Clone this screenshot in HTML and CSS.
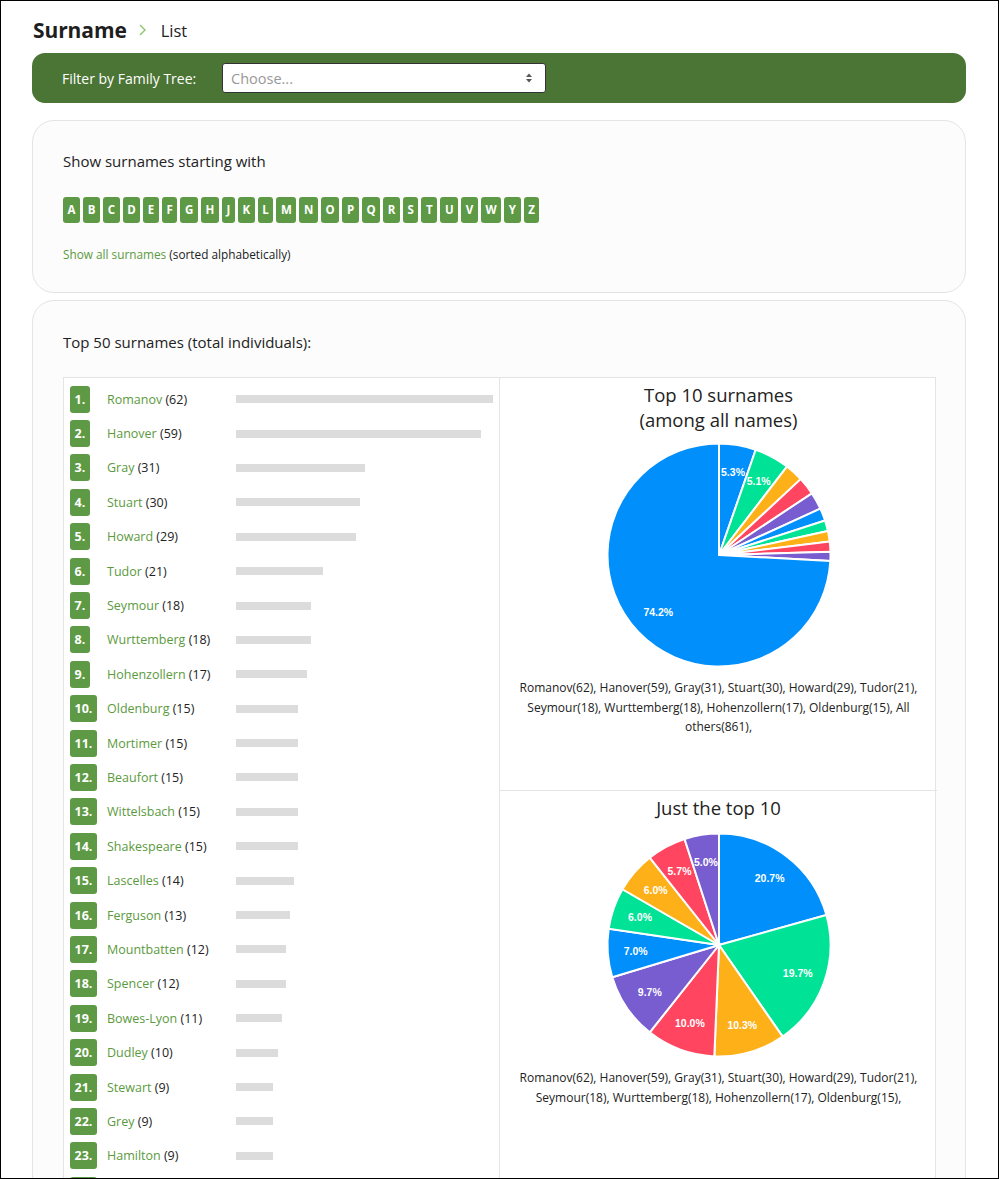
FILE: index.html
```html
<!DOCTYPE html>
<html lang="en">
<head>
<meta charset="utf-8">
<title>Surname List</title>
<link rel="stylesheet" href="styles.css">
</head>
<body>
<div class="frame"></div>
<div class="page">
  <div class="crumbs">
    <span class="crumb-main">Surname</span>
    <svg class="crumb-sep" width="10" height="14" viewBox="0 0 10 14"><polyline points="2,2 7,7 2,12" fill="none" stroke="#8cc56a" stroke-width="1.4"/></svg>
    <span class="crumb-sub">List</span>
  </div>

  <div class="filter-bar">
    <label class="filter-label">Filter by Family Tree:</label>
    <div class="select">
      <span class="select-ph">Choose...</span>
      <svg class="select-arrows" width="8" height="12" viewBox="0 0 8 12"><polygon points="4,1.5 7,5 1,5" fill="#555"/><polygon points="1,7 7,7 4,10.5" fill="#555"/></svg>
    </div>
  </div>

  <div class="card card-letters">
    <div class="card-title">Show surnames starting with</div>
    <div class="letters">
      <a class="letter">A</a><a class="letter">B</a><a class="letter">C</a><a class="letter">D</a><a class="letter">E</a><a class="letter">F</a><a class="letter">G</a><a class="letter">H</a><a class="letter">J</a><a class="letter">K</a><a class="letter">L</a><a class="letter">M</a><a class="letter">N</a><a class="letter">O</a><a class="letter">P</a><a class="letter">Q</a><a class="letter">R</a><a class="letter">S</a><a class="letter">T</a><a class="letter">U</a><a class="letter">V</a><a class="letter">W</a><a class="letter">Y</a><a class="letter">Z</a>
    </div>
    <div class="show-all"><a class="link">Show all surnames</a> (sorted alphabetically)</div>
  </div>

  <div class="card card-top">
    <div class="card-title">Top 50 surnames (total individuals):</div>
    <div class="top-table">
      <div class="rank-list" id="rankList"></div>
      <div class="charts">
        <div class="chart-cell chart-cell-1">
          <div class="chart-title">Top 10 surnames<br>(among all names)</div>
          <svg class="pie" id="pie1" width="230" height="230" viewBox="0 0 230 230"></svg>
          <div class="legend">Romanov(62), Hanover(59), Gray(31), Stuart(30), Howard(29), Tudor(21), Seymour(18), Wurttemberg(18), Hohenzollern(17), Oldenburg(15), All others(861),</div>
        </div>
        <div class="chart-cell chart-cell-2">
          <div class="chart-title">Just the top 10</div>
          <svg class="pie" id="pie2" width="230" height="230" viewBox="0 0 230 230"></svg>
          <div class="legend">Romanov(62), Hanover(59), Gray(31), Stuart(30), Howard(29), Tudor(21), Seymour(18), Wurttemberg(18), Hohenzollern(17), Oldenburg(15),</div>
        </div>
      </div>
    </div>
  </div>
</div>
<script src="script.js"></script>
</body>
</html>
```

FILE: styles.css
```css
* { box-sizing: border-box; }
html, body { margin: 0; padding: 0; background: #fff; }
body {
  font-family: "Open Sans", "Noto Sans", sans-serif;
  color: #222;
}
.frame {
  position: fixed;
  left: 0; top: 0;
  width: 999px; height: 1179px;
  border: 1px solid #000;
  pointer-events: none;
  z-index: 10;
}
.page {
  width: 934px;
  margin-left: 32px;
  padding-top: 16px;
}
.crumbs {
  display: flex;
  align-items: center;
  height: 28px;
  padding-left: 1px;
}
.crumb-main {
  font-size: 21px;
  font-weight: 700;
  color: #1e1e1e;
  letter-spacing: -0.1px;
}
.crumb-sep { margin-left: 11px; margin-right: 13px; }
.crumb-sub { font-size: 16.5px; color: #222; }

.filter-bar {
  margin-top: 9px;
  background: #4b7535;
  border-radius: 13px;
  padding: 10px 0 10px 30px;
  display: flex;
  align-items: center;
}
.filter-label {
  width: 160px;
  color: #fff;
  font-size: 14px;
}
.select {
  width: 324px;
  height: 30px;
  background: #fff;
  border: 1px solid #333;
  border-radius: 3px;
  display: flex;
  align-items: center;
  justify-content: space-between;
  padding: 0 12px 0 8px;
}
.select-ph { color: #999; font-size: 14.5px; }

.card {
  background: #fcfcfc;
  border: 1px solid #e4e4e4;
  border-radius: 22px;
  padding-left: 30px;
  padding-right: 29px;
}
.card-letters {
  margin-top: 17px;
  padding-top: 28px;
  padding-bottom: 29px;
}
.card-title {
  font-size: 15px;
  line-height: 24px;
  color: #222;
}
.letters {
  margin-top: 24px;
  display: flex;
  gap: 3px;
}
.letter {
  display: block;
  height: 26px;
  line-height: 26px;
  padding: 0 4.6px;
  background: #5e9a45;
  color: #fff;
  font-weight: 700;
  font-size: 11.5px;
  border-radius: 3px;
  text-align: center;
}
.show-all {
  margin-top: 22px;
  font-size: 11.8px;
  line-height: 18px;
  color: #222;
}
.link { color: #5b9a40; }

.card-top {
  margin-top: 7px;
  padding-top: 29px;
  height: 920px;
}
.top-table {
  margin-top: 23px;
  display: grid;
  grid-template-columns: 436px 437px;
  border: 1px solid #e4e4e4;
  background: #fff;
}
.rank-list {
  border-right: 1px solid #e4e4e4;
  padding: 4px 6px 0 6px;
}
.rank-row {
  display: flex;
  align-items: center;
  height: 34.4px;
}
.rank-badge-col { width: 37px; }
.rank-badge {
  display: inline-block;
  height: 27px;
  line-height: 27px;
  padding: 0 4.5px;
  background: #5e9a45;
  color: #fff;
  font-weight: 700;
  font-size: 12.5px;
  border-radius: 3px;
}
.rank-name {
  width: 129px;
  font-size: 12.5px;
  color: #222;
}
.bar-track { flex: 1; }
.bar {
  height: 8px;
  background: #dcdcdc;
}

.chart-cell {
  text-align: center;
  padding-top: 4px;
}
.chart-cell-1 {
  height: 413px;
  border-bottom: 1px solid #e4e4e4;
}
.chart-cell-2 { height: 420px; }
.chart-title {
  font-size: 18.5px;
  line-height: 25px;
  color: #222;
}
.pie { display: block; margin: 8px auto 0; }
.chart-cell-2 .pie { margin-top: 10px; }
.legend {
  margin-top: 8px;
  padding: 0 14px;
  font-size: 12px;
  line-height: 19.5px;
  color: #222;
}
.pie-label {
  font-family: "Liberation Sans", Arial, sans-serif;
  font-weight: 700;
  font-size: 10.5px;
  fill: #fff;
}
```

FILE: script.js
```js
(function () {
  var rows = [
    ["Romanov", 62], ["Hanover", 59], ["Gray", 31], ["Stuart", 30], ["Howard", 29],
    ["Tudor", 21], ["Seymour", 18], ["Wurttemberg", 18], ["Hohenzollern", 17], ["Oldenburg", 15],
    ["Mortimer", 15], ["Beaufort", 15], ["Wittelsbach", 15], ["Shakespeare", 15], ["Lascelles", 14],
    ["Ferguson", 13], ["Mountbatten", 12], ["Spencer", 12], ["Bowes-Lyon", 11], ["Dudley", 10],
    ["Stewart", 9], ["Grey", 9], ["Hamilton", 9], ["Boleyn", 8]
  ];
  var list = document.getElementById("rankList");
  var max = 62, full = 257;
  rows.forEach(function (r, i) {
    var row = document.createElement("div");
    row.className = "rank-row";
    row.innerHTML =
      '<div class="rank-badge-col"><span class="rank-badge">' + (i + 1) + '.</span></div>' +
      '<div class="rank-name"><a class="link">' + r[0] + '</a> (' + r[1] + ')</div>' +
      '<div class="bar-track"><div class="bar" style="width:' + (r[1] / max * full).toFixed(1) + 'px"></div></div>';
    list.appendChild(row);
  });

  var COLORS = ["#008FFB", "#00E396", "#FEB019", "#FF4560", "#775DD0"];
  var NS = "http://www.w3.org/2000/svg";
  function drawPie(id, data) {
    var svg = document.getElementById(id);
    var total = data.reduce(function (a, b) { return a + b; }, 0);
    var r = 111.5, cx = 115, cy = 115;
    var a0 = 0;
    var labels = [];
    data.forEach(function (v, i) {
      var frac = v / total;
      var a1 = a0 + frac * 2 * Math.PI;
      var x0 = cx + r * Math.sin(a0), y0 = cy - r * Math.cos(a0);
      var x1 = cx + r * Math.sin(a1), y1 = cy - r * Math.cos(a1);
      var large = frac > 0.5 ? 1 : 0;
      var p = document.createElementNS(NS, "path");
      p.setAttribute("d", "M" + cx + "," + cy + " L" + x0.toFixed(2) + "," + y0.toFixed(2) +
        " A" + r + "," + r + " 0 " + large + " 1 " + x1.toFixed(2) + "," + y1.toFixed(2) + " Z");
      p.setAttribute("fill", COLORS[i % 5]);
      p.setAttribute("stroke", "#fff");
      p.setAttribute("stroke-width", "2");
      svg.appendChild(p);
      if (frac * 360 >= 10) {
        var m = (a0 + a1) / 2;
        labels.push([cx + 0.75 * r * Math.sin(m), cy - 0.75 * r * Math.cos(m), (frac * 100).toFixed(1) + "%"]);
      }
      a0 = a1;
    });
    labels.forEach(function (l) {
      var t = document.createElementNS(NS, "text");
      t.setAttribute("x", l[0].toFixed(1));
      t.setAttribute("y", (l[1] + 3.5).toFixed(1));
      t.setAttribute("text-anchor", "middle");
      t.setAttribute("class", "pie-label");
      t.textContent = l[2];
      svg.appendChild(t);
    });
  }
  drawPie("pie1", [62, 59, 31, 30, 29, 21, 18, 18, 17, 15, 861]);
  drawPie("pie2", [62, 59, 31, 30, 29, 21, 18, 18, 17, 15]);
})();
```
